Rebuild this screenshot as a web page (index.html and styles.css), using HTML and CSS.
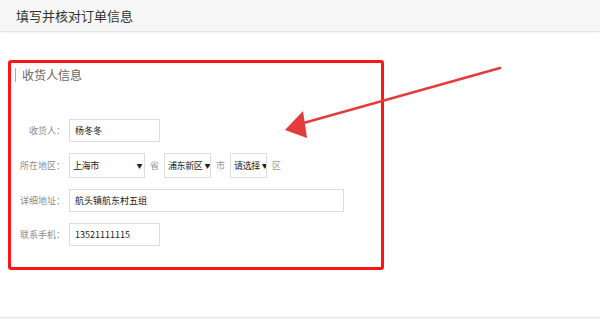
FILE: index.html
```html
<!DOCTYPE html>
<html lang="en">
<head>
    <meta charset="UTF-8">
    <title>填写并核对订单信息</title>
    <link rel="stylesheet" href="styles.css">
</head>
<body>
    <div class="topbar">填写并核对订单信息</div>

    <div class="page">
        <div class="order-box">
            <div class="box-title">收货人信息</div>

            <div class="addr-form">
                <div class="row">
                    <span class="label">收货人：</span>
                    <span class="field field-short">杨冬冬</span>
                </div>
                <div class="row row-area">
                    <span class="label">所在地区：</span>
                    <span class="sel sel-prov">上海市<i>▼</i></span>
                    <span class="unit">省</span>
                    <span class="sel sel-city">浦东新区<i>▼</i></span>
                    <span class="unit">市</span>
                    <span class="sel sel-dist">请选择<i>▼</i></span>
                    <span class="unit">区</span>
                </div>
                <div class="row">
                    <span class="label">详细地址：</span>
                    <span class="field field-long">航头镇航东村五组</span>
                </div>
                <div class="row">
                    <span class="label">联系手机：</span>
                    <span class="field field-short">13521111115</span>
                </div>
            </div>
        </div>

        <!-- annotation arrow -->
        <svg class="arrow" width="520" height="150" viewBox="0 0 520 150">
            <line x1="500" y1="68" x2="300" y2="124" stroke="#e23c3c" stroke-width="2.5" stroke-linecap="round"/>
            <polygon points="285,130 303,111 307,138" fill="#e23c3c"/>
        </svg>
    </div>

    <div class="next-section"></div>
</body>
</html>
```

FILE: styles.css
```css
body {
    margin: 0;
    font-family: "Noto Sans CJK SC", "Liberation Sans", sans-serif;
    background: #fff;
    color: #333;
    position: relative;
}

.topbar {
    height: 31px;
    line-height: 31px;
    padding-left: 16px;
    font-size: 13px;
    color: #333;
    background: #f6f6f6;
    border-bottom: 1px solid #e4e4e4;
    box-shadow: 0 1px 2px rgba(0,0,0,0.05);
}

.page {
    box-sizing: border-box;
    height: 285px;
    padding: 28px 0 0 8px;
}

.order-box {
    width: 366px;
    height: 199px;
    border: 3px solid #ff1515;
    border-radius: 3px;
    padding: 5px 0 0 4px;
    box-sizing: content-box;
}

.box-title {
    border-left: 1px solid #aaa;
    padding-left: 6px;
    height: 14px;
    line-height: 14px;
    font-size: 12px;
    color: #666;
}

.addr-form {
    margin-top: 37px;
}

.row {
    display: flex;
    align-items: center;
    height: 23px;
    margin-bottom: 11px;
}

.row-area {
    height: 25px;
    margin-bottom: 11px;
}

.label {
    width: 50px;
    text-align: right;
    margin-right: 4px;
    font-size: 9px;
    color: #8c8c8c;
    white-space: nowrap;
}

.field {
    box-sizing: border-box;
    height: 23px;
    line-height: 21px;
    border: 1px solid #ddd;
    padding-left: 5px;
    font-size: 9px;
    color: #222;
}

.field-short {
    width: 91px;
}

.field-long {
    width: 275px;
}

.sel {
    box-sizing: border-box;
    flex-shrink: 0;
    height: 25px;
    line-height: 23px;
    border: 1px solid #ddd;
    padding: 0 2px 0 3px;
    font-size: 9px;
    letter-spacing: -0.4px;
    color: #222;
    display: flex;
    justify-content: space-between;
    white-space: nowrap;
    overflow: hidden;
}

.sel i {
    font-style: normal;
    font-size: 6px;
    margin-left: 2px;
}

.sel-prov {
    width: 76px;
}

.sel-city {
    width: 47px;
}

.sel-dist {
    width: 37px;
}

.unit {
    font-size: 9px;
    color: #999;
    margin: 0 5px 0 5px;
}

.arrow {
    position: absolute;
    top: 0;
    left: 0;
    pointer-events: none;
}

.next-section {
    height: 1px;
    background: #f5f5f5;
    border-top: 1px solid #e8e8e8;
}
```
